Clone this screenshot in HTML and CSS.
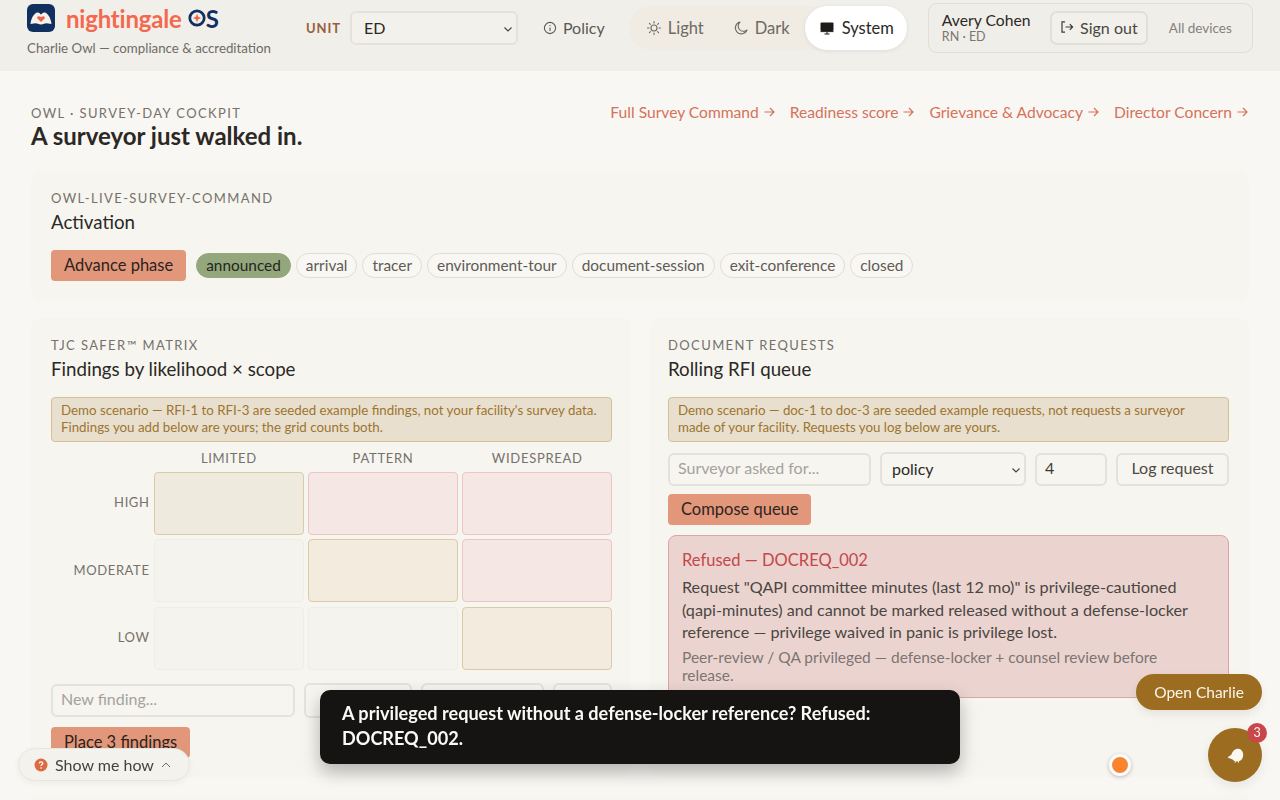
FILE: index.html
```html
<!DOCTYPE html>
<html>

<head>
    <title>Survey-day cockpit</title>
    <meta charset="utf-8">
    <meta name="viewport" content="width=device-width, initial-scale=1.0">
    <link rel="stylesheet" href="styles.css">
</head>

<body>

    <header class="topbar">
        <div class="brand">
            <div class="brand-row">
                <svg class="logo" width="28" height="28" viewBox="0 0 28 28">
                    <rect width="28" height="28" rx="6" fill="#10305f" />
                    <path d="M3.5 20 C4 15 6.5 10 9.8 8.6 C12 8 13.2 9.6 14 10.8 C14.8 9.6 16 8 18.2 8.6 C21.5 10 24 15 24.5 20 L19.5 19.3 C18 19.3 16 20.4 14 20.6 C12 20.4 10 19.3 8.5 19.3 Z" fill="#f7f3ec" />
                    <path d="M14 18 L10.4 14.6 C9.3 13 11.7 11 14 13.3 C16.3 11 18.7 13 17.6 14.6 Z" fill="#f0614a" />
                </svg>
                <span class="brand-name">nightingale</span>
                <span class="brand-os">
                    <svg width="18" height="18" viewBox="0 0 17 17">
                        <circle cx="8.5" cy="8.5" r="6.8" fill="none" stroke="#10305f" stroke-width="2.6" />
                        <path d="M8.5 4.6 L9.6 7.4 L12.4 8.5 L9.6 9.6 L8.5 12.4 L7.4 9.6 L4.6 8.5 L7.4 7.4 Z" fill="#f0614a" />
                    </svg>S</span>
            </div>
            <div class="brand-sub">Charlie Owl — compliance &amp; accreditation</div>
        </div>

        <label class="unit-label">UNIT</label>
        <div class="select unit-select">ED
            <svg class="chev" width="10" height="10" viewBox="0 0 10 10"><path d="M1.5 3.5 L5 7 L8.5 3.5" /></svg>
        </div>

        <a class="policy">
            <svg width="14" height="14" viewBox="0 0 14 14" fill="none" stroke="#5c5853" stroke-width="1.1">
                <circle cx="7" cy="7" r="5.6" />
                <path d="M7 6.4 V10 M7 4 V4.9" />
            </svg>
            Policy</a>

        <div class="theme">
            <span class="theme-btn">
                <svg width="16" height="16" viewBox="0 0 16 16" fill="none" stroke="#6e6a64" stroke-width="1.1" stroke-linecap="round">
                    <circle cx="8" cy="8" r="3" />
                    <path d="M8 1.5 V3 M8 13 V14.5 M1.5 8 H3 M13 8 H14.5 M3.4 3.4 L4.4 4.4 M11.6 11.6 L12.6 12.6 M3.4 12.6 L4.4 11.6 M11.6 4.4 L12.6 3.4" />
                </svg>
                Light</span>
            <span class="theme-btn">
                <svg width="16" height="16" viewBox="0 0 16 16" fill="none" stroke="#6e6a64" stroke-width="1.1" stroke-linejoin="round">
                    <path d="M7 2 A6 6 0 1 0 14 10 A5.2 5.2 0 0 1 7 2 Z" />
                </svg>
                Dark</span>
            <span class="theme-btn active">
                <svg width="16" height="16" viewBox="0 0 16 16">
                    <rect x="1.5" y="2.5" width="13" height="8.5" rx="1" fill="#1d1b19" />
                    <path d="M1.5 11.6 H14.5 M8 12 V14 M5.5 14 H10.5" stroke="#1d1b19" stroke-width="1" fill="none" />
                </svg>
                System</span>
        </div>

        <div class="account">
            <div class="who">
                <div class="who-name">Avery Cohen</div>
                <div class="who-role">RN · ED</div>
            </div>
            <button class="signout">
                <svg width="14" height="14" viewBox="0 0 14 14" fill="none" stroke="#3e3a36" stroke-width="1.2">
                    <path d="M5 1.8 H2 V12.2 H5 M5.5 7 H12.5 M9.8 4.2 L12.6 7 L9.8 9.8" />
                </svg>
                Sign out</button>
            <span class="devices">All devices</span>
        </div>
    </header>

    <main class="page">
        <div class="page-head">
            <div>
                <div class="eyebrow">OWL · SURVEY-DAY COCKPIT</div>
                <h1>A surveyor just walked in.</h1>
            </div>
            <nav class="links">
                <a>Full Survey Command <svg class="arrow" width="11" height="10" viewBox="0 0 11 10"><path d="M0.5 5 H10 M6 1 L10 5 L6 9" /></svg></a>
                <a>Readiness score <svg class="arrow" width="11" height="10" viewBox="0 0 11 10"><path d="M0.5 5 H10 M6 1 L10 5 L6 9" /></svg></a>
                <a>Grievance &amp; Advocacy <svg class="arrow" width="11" height="10" viewBox="0 0 11 10"><path d="M0.5 5 H10 M6 1 L10 5 L6 9" /></svg></a>
                <a>Director Concern <svg class="arrow" width="11" height="10" viewBox="0 0 11 10"><path d="M0.5 5 H10 M6 1 L10 5 L6 9" /></svg></a>
            </nav>
        </div>

        <section class="card activation">
            <div class="eyebrow">OWL-LIVE-SURVEY-COMMAND</div>
            <h2>Activation</h2>
            <div class="phases">
                <button class="primary">Advance phase</button>
                <span class="pill on">announced</span>
                <span class="pill">arrival</span>
                <span class="pill">tracer</span>
                <span class="pill">environment-tour</span>
                <span class="pill">document-session</span>
                <span class="pill">exit-conference</span>
                <span class="pill">closed</span>
            </div>
        </section>

        <div class="columns">
            <section class="card card-safer">
                <div class="eyebrow">TJC SAFER™ MATRIX</div>
                <h2>Findings by likelihood × scope</h2>
                <div class="demo">Demo scenario — RFI-1 to RFI-3 are seeded example findings, not your facility's survey data. Findings you add below are yours; the grid counts both.</div>

                <div class="matrix">
                    <span></span>
                    <span class="col-label">LIMITED</span>
                    <span class="col-label">PATTERN</span>
                    <span class="col-label">WIDESPREAD</span>

                    <span class="row-label">HIGH</span>
                    <div class="cell amber"></div>
                    <div class="cell rose"></div>
                    <div class="cell rose"></div>

                    <span class="row-label">MODERATE</span>
                    <div class="cell"></div>
                    <div class="cell amber light"></div>
                    <div class="cell rose"></div>

                    <span class="row-label">LOW</span>
                    <div class="cell"></div>
                    <div class="cell"></div>
                    <div class="cell amber light"></div>
                </div>

                <div class="finding-form">
                    <input class="field finding-input" placeholder="New finding...">
                    <div class="field finding-a"></div>
                    <div class="field finding-b"></div>
                    <div class="field finding-c"></div>
                </div>
                <button class="primary">Place 3 findings</button>
            </section>

            <section class="card card-rfi">
                <div class="eyebrow">DOCUMENT REQUESTS</div>
                <h2>Rolling RFI queue</h2>
                <div class="demo">Demo scenario — doc-1 to doc-3 are seeded example requests, not requests a surveyor made of your facility. Requests you log below are yours.</div>

                <div class="request-form">
                    <input class="field request-input" placeholder="Surveyor asked for...">
                    <div class="select request-select">policy
                        <svg class="chev" width="10" height="10" viewBox="0 0 10 10"><path d="M1.5 3.5 L5 7 L8.5 3.5" /></svg>
                    </div>
                    <div class="field request-num">4</div>
                    <button class="ghost">Log request</button>
                </div>
                <button class="primary">Compose queue</button>

                <div class="refused">
                    <div class="refused-title">Refused — DOCREQ_002</div>
                    <p>Request "QAPI committee minutes (last 12 mo)" is privilege-cautioned (qapi-minutes) and cannot be marked released without a defense-locker reference — privilege waived in panic is privilege lost.</p>
                    <div class="refused-note">Peer-review / QA privileged — defense-locker + counsel review before release.</div>
                </div>
            </section>
        </div>

        <section class="next-card"></section>
    </main>

    <div class="toast">A privileged request without a defense-locker reference? Refused: DOCREQ_002.</div>

    <button class="howto">
        <svg width="14" height="14" viewBox="0 0 14 14">
            <circle cx="7" cy="7" r="6.5" fill="#dd6b42" />
            <path d="M5.3 5.4 C5.4 3.4 8.8 3.4 8.8 5.4 C8.8 6.6 7 6.6 7 8" fill="none" stroke="#fff" stroke-width="1.2" />
            <circle cx="7" cy="10" r=".8" fill="#fff" />
        </svg>
        Show me how
        <svg width="10" height="10" viewBox="0 0 10 10" fill="none" stroke="#6e6a64" stroke-width="1"><path d="M1 7 L5 3 L9 7" /></svg>
    </button>

    <button class="open-charlie">Open Charlie</button>
    <div class="orange-dot"></div>
    <button class="owl-btn">
        <svg width="17" height="15" viewBox="0 0 17 15">
            <path d="M0.5 9.5 L4.5 6.5 C5.5 2.8 8.5 0.4 11.5 0.8 C14.5 1.2 16.3 4 16.2 7.2 C16 11 13.5 13.4 10.2 13.4 C8.2 13.4 6.6 12.6 5.6 11.4 Z" fill="#fbf8f1" />
            <path d="M8.5 13 L8 14.6 M11.5 13 L11.5 14.6" stroke="#fbf8f1" stroke-width="1" />
        </svg>
        <span class="owl-badge">3</span>
    </button>

</body>

</html>
```

FILE: styles.css
```css
* {
    box-sizing: border-box;
}

html,
body {
    height: 800px;
    overflow: hidden;
}

body {
    margin: 0;
    background-color: #f9f7f3;
    color: #2b2825;
    font-family: "Lato", "Noto Sans", sans-serif;
    font-size: 16px;
}

button {
    font-family: inherit;
    color: inherit;
}

.topbar {
    height: 71px;
    background-color: #f1efea;
    display: flex;
    align-items: center;
    padding: 0 27px 15px;
}

.brand {
    width: 262px;
    margin-top: 4px;
}

.brand-row {
    display: flex;
    align-items: center;
    height: 28px;
}

.brand-name {
    margin-left: 11px;
    font-size: 24px;
    font-weight: 700;
    color: #f4694e;
    letter-spacing: -0.2px;
}

.brand-os {
    margin-left: 6px;
    display: flex;
    align-items: center;
    font-size: 24px;
    font-weight: 700;
    color: #10305f;
}

.brand-sub {
    margin-top: 8px;
    font-size: 13.3px;
    line-height: 16px;
    color: #6f6b65;
    white-space: nowrap;
}

.unit-label {
    margin-left: 17px;
    font-size: 13px;
    font-weight: 700;
    letter-spacing: 0.9px;
    color: #96603c;
}

.select,
.field,
.ghost {
    background-color: #f7f5f0;
    border: 2px solid #e5e2dc;
    border-radius: 6px;
    display: flex;
    align-items: center;
    font-size: 16px;
}

.select {
    position: relative;
    padding-bottom: 2px;
}

.chev {
    position: absolute;
    right: 3px;
    top: 11px;
    fill: none;
    stroke: #4a4641;
    stroke-width: 1.2;
}

.unit-select {
    margin-left: 9px;
    width: 168px;
    height: 34px;
    padding-left: 12px;
    background-color: #f3f1ec;
}

.policy {
    margin-left: 25px;
    display: flex;
    align-items: center;
    gap: 6px;
    padding-bottom: 1px;
    color: #5c5853;
}

.theme {
    margin-left: 24px;
    display: flex;
    align-items: center;
    height: 44px;
    padding-left: 3px;
    border-radius: 23px;
    background: linear-gradient(90deg, #f0ebe3, #f0ebe3 60%, #f1efea);
}

.theme-btn {
    height: 44px;
    padding: 0 14px;
    margin-right: 1px;
    display: flex;
    align-items: center;
    gap: 6px;
    font-size: 16.5px;
    color: #6e6a64;
    border-radius: 22px;
}

.theme-btn.active {
    margin-right: 0;
    gap: 7px;
    padding: 0 13px 0 14px;
    background-color: #ffffff;
    color: #2b2825;
    box-shadow: 0 1px 4px rgba(0, 0, 0, 0.08);
}

.account {
    margin-left: 21px;
    width: 325px;
    height: 50px;
    display: flex;
    align-items: center;
    padding: 0 13px;
    background-color: #f0eee9;
    border: 1px solid #e1ded8;
    border-radius: 9px;
}

.who {
    width: 108px;
}

.who-name {
    font-size: 15.7px;
    line-height: 17px;
}

.who-role {
    font-size: 12.5px;
    line-height: 16px;
    color: #7a7670;
}

.signout {
    width: 98px;
    height: 34px;
    padding: 0 0 2px;
    display: flex;
    align-items: center;
    justify-content: center;
    gap: 6px;
    font-size: 16px;
    color: #4a4641;
    background-color: #f2f0eb;
    border: 2px solid #e2dfd9;
    border-radius: 7px;
}

.devices {
    margin-left: 21px;
    font-size: 13.5px;
    color: #85817b;
}

.page {
    padding: 0 31px;
}

.page-head {
    display: flex;
    justify-content: space-between;
    padding-top: 34px;
    height: 100px;
}

.eyebrow {
    font-size: 13px;
    line-height: 16px;
    letter-spacing: 1.4px;
    color: #75716b;
}

h1 {
    margin: 0;
    font-size: 24px;
    line-height: 30px;
    font-weight: 700;
}

h2 {
    margin: 3px 0 0;
    font-size: 18.7px;
    line-height: 26px;
    font-weight: 400;
}

.links {
    display: flex;
    gap: 15px;
    margin-right: 1px;
    line-height: 14px;
    font-size: 15.6px;
    color: #d4725a;
}

.links a {
    display: flex;
    align-items: center;
    gap: 5px;
    height: 14px;
}

.arrow {
    fill: none;
    stroke: #d4725a;
    stroke-width: 1.2;
}

.card {
    background-color: #f6f5f0;
    border-radius: 10px;
    padding: 19px 20px;
}

.activation {
    height: 129px;
    margin-bottom: 18px;
}

.phases {
    margin-top: 15px;
    display: flex;
    align-items: center;
    gap: 5px;
}

.primary {
    height: 31px;
    padding: 0 13px 1px;
    border: 0;
    border-radius: 4px;
    background-color: #e2977b;
    color: #2b2420;
    font-size: 16.5px;
}

.phases .primary {
    margin-right: 5px;
}

.pill {
    height: 25px;
    padding: 0 9px 1px;
    display: flex;
    align-items: center;
    font-size: 15.4px;
    color: #5f5b55;
    border: 1px solid #e0ddd6;
    border-radius: 13px;
    background-color: #f8f7f3;
}

.pill.on {
    background-color: #93a67c;
    border-color: #93a67c;
    color: #24271d;
}

.columns {
    display: grid;
    grid-template-columns: 600px 599px;
    gap: 19px;
    height: 459px;
    margin-bottom: 18px;
}

.card-safer {
    padding-right: 19px;
}

.card-rfi {
    padding-left: 18px;
}

.card-rfi .primary {
    padding-right: 12px;
}

.next-card {
    height: 5px;
    background-color: #f6f5f0;
}

.demo {
    margin-top: 15px;
    height: 45px;
    padding: 4px 9px;
    font-size: 13.3px;
    line-height: 17px;
    color: #9c752f;
    background-color: #e9dfce;
    border: 1px solid #d5c194;
    border-radius: 4px;
}

.matrix {
    margin-top: 8px;
    display: grid;
    grid-template-columns: 98.5px 1fr 1fr 1fr;
    grid-template-rows: 17.5px 62.8px 62.8px 62.8px;
    gap: 4.6px;
}

.col-label {
    text-align: center;
    font-size: 13px;
    letter-spacing: 0.7px;
    color: #75716b;
    line-height: 16px;
}

.row-label {
    align-self: center;
    text-align: right;
    font-size: 13px;
    letter-spacing: 0.6px;
    padding-bottom: 2px;
    color: #75716b;
}

.cell {
    background-color: #f4f3ee;
    border: 1px solid #eeede7;
    border-radius: 4px;
}

.cell.amber {
    background-color: #efeade;
    border-color: #d9cba6;
}

.cell.amber.light {
    background-color: #f2ebde;
}

.cell.rose {
    background-color: #f4e7e4;
    border-color: #edc5c3;
}

.finding-form {
    margin-top: 13px;
    display: flex;
    align-items: center;
    gap: 9px;
    margin-bottom: 9px;
}

.field {
    height: 33px;
    padding: 0 0 3px 8px;
    color: #3e3a36;
    font-family: inherit;
    outline: none;
}

.field::placeholder {
    color: #a5a29d;
    opacity: 1;
}

.finding-input {
    width: 244px;
}

.finding-a {
    width: 108px;
    height: 35px;
}

.finding-b {
    width: 123px;
    height: 35px;
}

.finding-c {
    width: 59px;
    height: 35px;
}

.request-form {
    margin-top: 10px;
    display: flex;
    align-items: center;
    gap: 9px;
    margin-bottom: 8px;
}

.request-input {
    width: 203px;
}

.request-select {
    width: 146px;
    height: 34px;
    padding-left: 10px;
}

.request-num {
    width: 72px;
}

.ghost {
    width: 113px;
    height: 33px;
    justify-content: center;
    padding: 0 0 3px;
    color: #4e4a45;
}

.refused {
    margin-top: 10px;
    height: 163px;
    padding: 14px 13px;
    background-color: #ebd4d0;
    border: 1px solid #dfa4a5;
    border-radius: 8px;
}

.refused-title {
    font-size: 16.5px;
    color: #c4474a;
    line-height: 20px;
}

.refused p {
    margin: 6px 0 0;
    font-size: 16.2px;
    line-height: 22.5px;
    color: #4a4641;
}

.refused-note {
    margin-top: 4px;
    padding-right: 50px;
    font-size: 15.5px;
    line-height: 18px;
    color: #7c7570;
}

/* ting der ligger ovenpå */
.toast {
    position: fixed;
    left: 320px;
    top: 690px;
    width: 640px;
    height: 74px;
    padding: 11px 22px;
    background-color: #161413;
    color: #fbf9f5;
    border-radius: 10px;
    font-size: 18.1px;
    font-weight: 700;
    line-height: 25px;
    box-shadow: 0 8px 18px rgba(0, 0, 0, 0.28);
}

.howto {
    position: fixed;
    left: 18px;
    top: 748px;
    width: 172px;
    height: 33px;
    padding: 0 0 0 15px;
    display: flex;
    align-items: center;
    gap: 7px;
    font-size: 16px;
    color: #46423d;
    background-color: #f4f2ec;
    border: 1px solid #e8e5de;
    border-radius: 17px;
    box-shadow: 0 2px 6px rgba(0, 0, 0, 0.05);
}

.open-charlie {
    position: fixed;
    left: 1136px;
    top: 674px;
    width: 126px;
    height: 36px;
    padding: 0;
    border: 0;
    border-radius: 18px;
    background-color: #9c6c20;
    color: #fbf6ea;
    font-size: 15.5px;
    box-shadow: 0 4px 10px rgba(0, 0, 0, 0.08);
}

.orange-dot {
    position: fixed;
    left: 1109px;
    top: 754px;
    width: 22px;
    height: 22px;
    border-radius: 50%;
    background-color: #fb8431;
    border: 3px solid #ffffff;
    box-shadow: 0 1px 4px rgba(0, 0, 0, 0.25);
}

.owl-btn {
    position: fixed;
    left: 1208px;
    top: 728px;
    width: 54px;
    height: 54px;
    padding: 0;
    display: flex;
    align-items: center;
    justify-content: center;
    border: 0;
    border-radius: 50%;
    background-color: #9c6c20;
    box-shadow: 0 4px 12px rgba(0, 0, 0, 0.08);
}

.owl-badge {
    position: absolute;
    left: 39px;
    top: -5px;
    width: 20px;
    height: 20px;
    border-radius: 50%;
    background-color: #c8474b;
    color: #fbf6ea;
    font-size: 12.5px;
    line-height: 20px;
    text-align: center;
}
```
